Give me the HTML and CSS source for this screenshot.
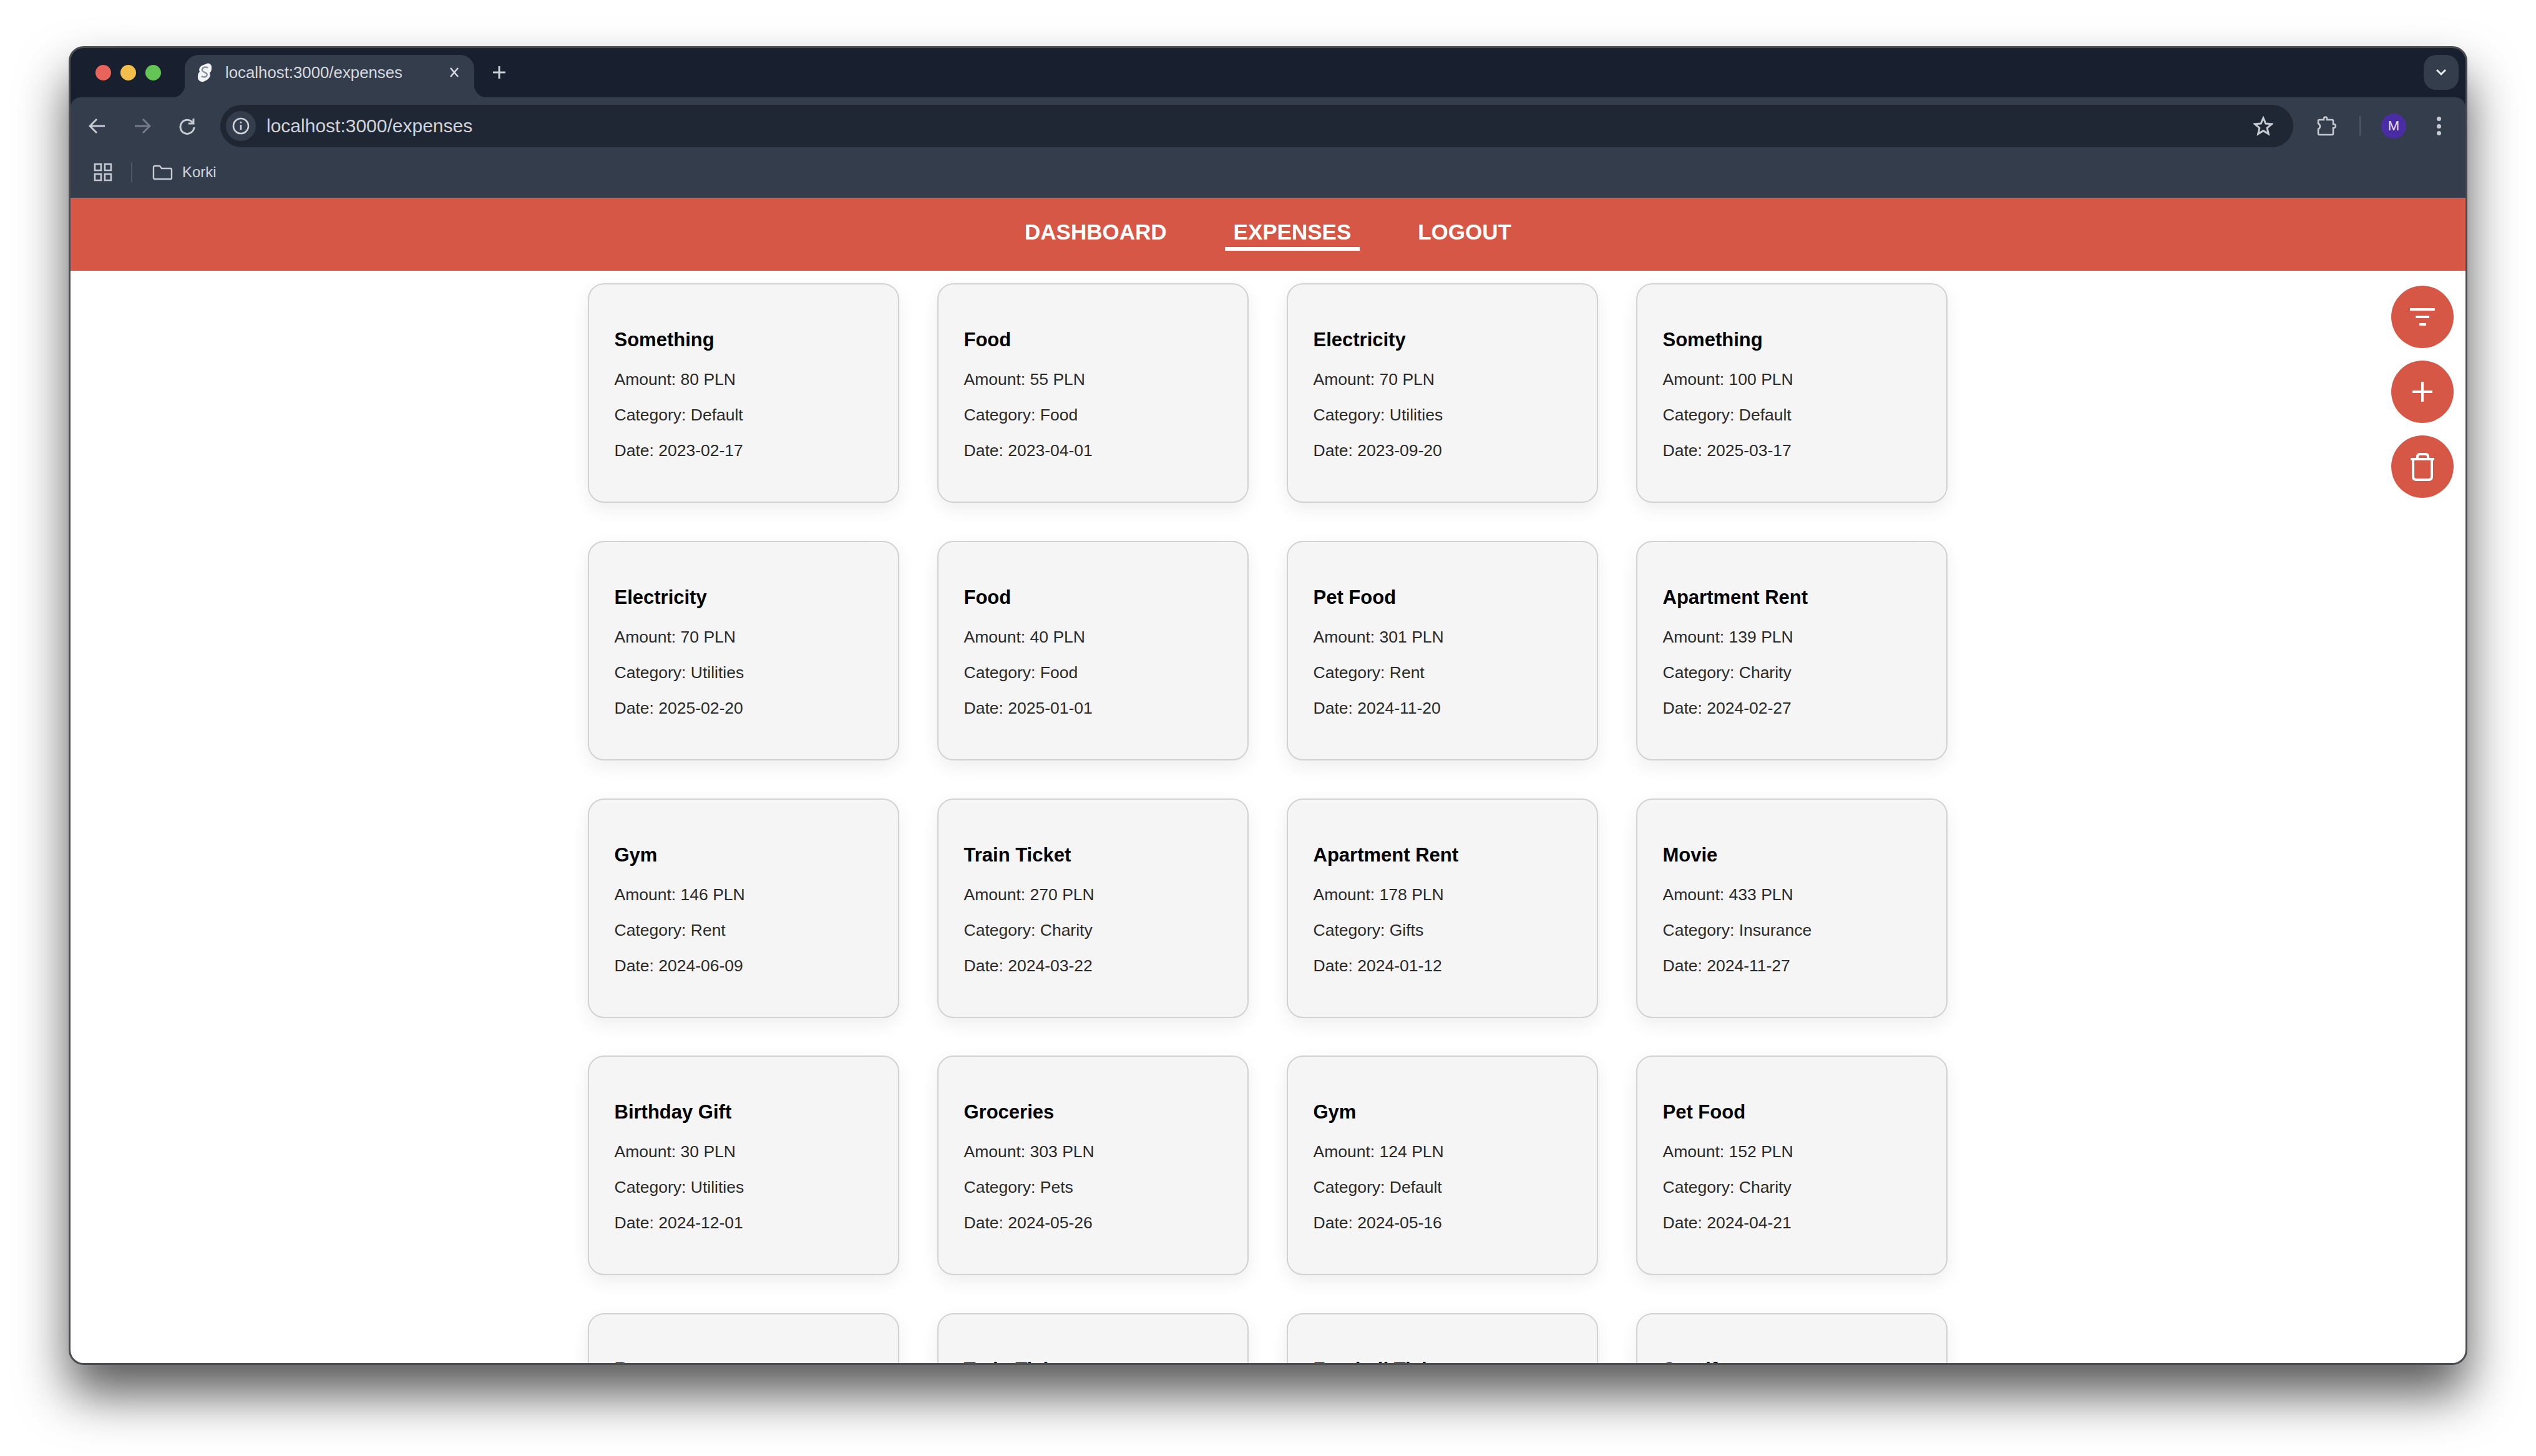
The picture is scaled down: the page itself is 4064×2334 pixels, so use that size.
FILE: index.html
```html
<!DOCTYPE html>
<html lang="en">
<head>
    <meta charset="UTF-8">
    <meta name="viewport" content="width=device-width, initial-scale=1.0">
    <title>Expenses</title>
    <link rel="stylesheet" href="styles.css">
</head>
<body>
    <div class="window">
        <div class="tabstrip">
            <div class="traffic">
                <span class="dot dot-red"></span>
                <span class="dot dot-yellow"></span>
                <span class="dot dot-green"></span>
            </div>
            <div class="tab">
                <svg class="favicon" viewBox="0 0 24 32">
                    <path d="M15 2 C20 0 24 4 23 10 C23 13 22 15 20 17 C22 21 20 25 16 28 L10 31 C5 32 0 28 1 22 C1 19 2 17 4 15 C2 11 4 7 8 5 Z" fill="#f2f3f5"/>
                    <path d="M17 9 C14 6 9 8 8 11 C7 14 10 15 12 16 C15 17 17 19 15 22 C13 24 9 24 7 22" fill="none" stroke="#8b929e" stroke-width="2.4"/>
                </svg>
                <span class="tab-title">localhost:3000/expenses</span>
                <svg class="tab-close" viewBox="0 0 18 18">
                    <path d="M3 2 L15 16 M15 2 L3 16" stroke="#d5d9e0" stroke-width="2.6" fill="none"/>
                </svg>
            </div>
            <svg class="new-tab" viewBox="0 0 24 24">
                <path d="M12 2 V22 M2 12 H22" stroke="#c8ced8" stroke-width="3" fill="none"/>
            </svg>
            <div class="tab-search">
                <svg viewBox="0 0 18 12" width="18" height="12">
                    <path d="M2 2 L9 9 L16 2" stroke="#e6e8ec" stroke-width="3" fill="none"/>
                </svg>
            </div>
        </div>

        <div class="toolbar">
            <div class="nav-btn">
                <svg viewBox="0 0 28 28" width="28" height="28"><path d="M26 14 H3 M13 3 L2 14 L13 25" stroke="#c5cad3" stroke-width="3" fill="none"/></svg>
            </div>
            <div class="nav-btn">
                <svg viewBox="0 0 28 28" width="28" height="28"><path d="M2 14 H25 M15 3 L26 14 L15 25" stroke="#737b8a" stroke-width="3" fill="none"/></svg>
            </div>
            <div class="nav-btn">
                <svg viewBox="0 0 28 28" width="28" height="28">
                    <path d="M23 9 A11 11 0 1 0 25 16" stroke="#c5cad3" stroke-width="3" fill="none"/>
                    <path d="M24 2 V10 H16" stroke="#c5cad3" stroke-width="3" fill="none"/>
                </svg>
            </div>
            <div class="omnibox">
                <div class="site-info">
                    <svg viewBox="0 0 28 28" width="28" height="28">
                        <circle cx="14" cy="14" r="12" stroke="#d0d4da" stroke-width="2.6" fill="none"/>
                        <path d="M14 12 V20 M14 7 V9.5" stroke="#d0d4da" stroke-width="2.6" fill="none"/>
                    </svg>
                </div>
                <span class="url">localhost:3000/expenses</span>
                <svg class="star" viewBox="0 0 32 32" width="32" height="32">
                    <path d="M16 3 L19.8 12 L29.5 12.8 L22.1 19.1 L24.3 28.6 L16 23.6 L7.7 28.6 L9.9 19.1 L2.5 12.8 L12.2 12 Z" stroke="#c5cad3" stroke-width="3" fill="none"/>
                </svg>
            </div>
            <div class="actions">
                <div class="action action-wide">
                    <svg viewBox="0 0 32 32" width="32" height="32">
                        <path d="M3 8 Q3 6 5 6 H12 V4 a2.5 2.5 0 0 1 5 0 V6 H25 Q27 6 27 8 V13 h1 a3 3 0 0 1 0 6 h-1 V28 Q27 30 25 30 H5 Q3 30 3 28 V21 a5 5 0 0 0 0 -9 Z" stroke="#c5cad3" stroke-width="2.6" fill="none"/>
                    </svg>
                </div>
                <span class="toolbar-sep"></span>
                <div class="action action-wide"><span class="avatar">M</span></div>
                <div class="action action-menu">
                    <span class="menu-dot"></span>
                    <span class="menu-dot"></span>
                    <span class="menu-dot"></span>
                </div>
            </div>
        </div>

        <div class="bookmarks">
            <svg viewBox="0 0 30 30" width="30" height="30">
                <path d="M2 2 H12 V12 H2 Z M18 2 H28 V12 H18 Z M2 18 H12 V28 H2 Z M18 18 H28 V28 H18 Z" stroke="#c5cad3" stroke-width="2.6" fill="none"/>
            </svg>
            <span class="bookmarks-sep"></span>
            <svg class="folder" viewBox="0 0 33 25" width="33" height="25">
                <path d="M2 4 Q2 2 4 2 H12 L15 6 H29 Q31 6 31 8 V21 Q31 23 29 23 H4 Q2 23 2 21 Z" stroke="#c5cad3" stroke-width="2.4" fill="none"/>
            </svg>
            <span class="bookmark-label">Korki</span>
        </div>

        <nav class="navbar">
            <a class="nav-link">DASHBOARD</a>
            <a class="nav-link active">EXPENSES</a>
            <a class="nav-link">LOGOUT</a>
        </nav>

        <main class="content">
            <div class="expense-grid">
                <div class="card"><h3>Something</h3><p>Amount: 80 PLN</p><p>Category: Default</p><p>Date: 2023-02-17</p></div>
                <div class="card"><h3>Food</h3><p>Amount: 55 PLN</p><p>Category: Food</p><p>Date: 2023-04-01</p></div>
                <div class="card"><h3>Electricity</h3><p>Amount: 70 PLN</p><p>Category: Utilities</p><p>Date: 2023-09-20</p></div>
                <div class="card"><h3>Something</h3><p>Amount: 100 PLN</p><p>Category: Default</p><p>Date: 2025-03-17</p></div>

                <div class="card"><h3>Electricity</h3><p>Amount: 70 PLN</p><p>Category: Utilities</p><p>Date: 2025-02-20</p></div>
                <div class="card"><h3>Food</h3><p>Amount: 40 PLN</p><p>Category: Food</p><p>Date: 2025-01-01</p></div>
                <div class="card"><h3>Pet Food</h3><p>Amount: 301 PLN</p><p>Category: Rent</p><p>Date: 2024-11-20</p></div>
                <div class="card"><h3>Apartment Rent</h3><p>Amount: 139 PLN</p><p>Category: Charity</p><p>Date: 2024-02-27</p></div>

                <div class="card"><h3>Gym</h3><p>Amount: 146 PLN</p><p>Category: Rent</p><p>Date: 2024-06-09</p></div>
                <div class="card"><h3>Train Ticket</h3><p>Amount: 270 PLN</p><p>Category: Charity</p><p>Date: 2024-03-22</p></div>
                <div class="card"><h3>Apartment Rent</h3><p>Amount: 178 PLN</p><p>Category: Gifts</p><p>Date: 2024-01-12</p></div>
                <div class="card"><h3>Movie</h3><p>Amount: 433 PLN</p><p>Category: Insurance</p><p>Date: 2024-11-27</p></div>

                <div class="card"><h3>Birthday Gift</h3><p>Amount: 30 PLN</p><p>Category: Utilities</p><p>Date: 2024-12-01</p></div>
                <div class="card"><h3>Groceries</h3><p>Amount: 303 PLN</p><p>Category: Pets</p><p>Date: 2024-05-26</p></div>
                <div class="card"><h3>Gym</h3><p>Amount: 124 PLN</p><p>Category: Default</p><p>Date: 2024-05-16</p></div>
                <div class="card"><h3>Pet Food</h3><p>Amount: 152 PLN</p><p>Category: Charity</p><p>Date: 2024-04-21</p></div>

                <div class="card"><h3>Restaurant</h3></div>
                <div class="card"><h3>Train Ticket</h3></div>
                <div class="card"><h3>Football Ticket</h3></div>
                <div class="card"><h3>Spotify</h3></div>
            </div>

            <div class="fab-stack">
                <button class="fab">
                    <svg viewBox="0 0 100 100" width="100" height="100">
                        <path d="M30 38 H70 M39 50 H61 M45 62 H56" stroke="#fff" stroke-width="4" fill="none"/>
                    </svg>
                </button>
                <button class="fab">
                    <svg viewBox="0 0 100 100" width="100" height="100">
                        <path d="M34 50 H66 M50 34 V66" stroke="#fff" stroke-width="4" fill="none"/>
                    </svg>
                </button>
                <button class="fab">
                    <svg viewBox="0 0 100 100" width="100" height="100">
                        <path d="M31 38 H69 M35 38 V66 Q35 71 40 71 H60 Q65 71 65 66 V38 M42 38 V34 Q42 30 46 30 H55 Q59 30 59 34 V38" stroke="#fff" stroke-width="4" fill="none"/>
                    </svg>
                </button>
            </div>
        </main>
    </div>
</body>
</html>
```
FILE: styles.css
```css
html,
body {
    height: 100%;
}

body {
    margin: 0;
    padding: 74px 110px 0;
    box-sizing: border-box;
    background-color: #fff;
    font-family: "Liberation Sans", Arial, sans-serif;
    overflow: hidden;
}

.window {
    display: flex;
    flex-direction: column;
    box-sizing: border-box;
    height: 2114px;
    border: 3px solid #4a4c50;
    border-radius: 24px;
    background-color: #182030;
    box-shadow: 0 47px 80px rgba(0, 0, 0, 0.65);
    overflow: hidden;
}

/* browser chrome */
.tabstrip {
    display: flex;
    align-items: flex-start;
    box-sizing: border-box;
    height: 79px;
    padding: 11px 11px 0 40px;
}

.traffic {
    display: flex;
    align-items: center;
    gap: 15px;
    height: 56px;
    margin-right: 38px;
}

.dot {
    width: 25px;
    height: 25px;
    border-radius: 50%;
}

.dot-red { background-color: #e8645a; }
.dot-yellow { background-color: #f1bd4b; }
.dot-green { background-color: #62c554; }

.tab {
    position: relative;
    display: flex;
    align-items: center;
    box-sizing: border-box;
    width: 464px;
    height: 68px;
    padding: 0 23px 12px 20px;
    border-radius: 22px 22px 0 0;
    background-color: #343d4c;
}

.tab::before,
.tab::after {
    content: "";
    position: absolute;
    bottom: 0;
    width: 20px;
    height: 20px;
}

.tab::before {
    left: -20px;
    background: radial-gradient(circle at 0 0, transparent 20px, #343d4c 20.5px);
}

.tab::after {
    right: -20px;
    background: radial-gradient(circle at 100% 0, transparent 20px, #343d4c 20.5px);
}

.favicon {
    width: 24px;
    height: 32px;
    margin-right: 21px;
}

.tab-title {
    flex: 1;
    font-size: 25.8px;
    color: #d5d9e0;
    white-space: nowrap;
}

.tab-close {
    width: 18px;
    height: 18px;
}

.new-tab {
    width: 24px;
    height: 24px;
    margin: 16px 0 0 28px;
}

.tab-search {
    display: flex;
    align-items: center;
    justify-content: center;
    width: 56px;
    height: 56px;
    margin-left: auto;
    border-radius: 20px;
    background-color: #343d4c;
}

.toolbar {
    display: flex;
    align-items: center;
    box-sizing: border-box;
    height: 92px;
    padding: 12px 0 12px 7px;
    border-radius: 16px 16px 0 0;
    background-color: #343d4c;
}

.nav-btn {
    display: flex;
    align-items: center;
    justify-content: center;
    width: 72px;
}

.omnibox {
    flex: 1;
    display: flex;
    align-items: center;
    height: 68px;
    margin-left: 17px;
    padding: 0 32px 0 9px;
    border-radius: 34px;
    background-color: #1e2733;
}

.site-info {
    display: flex;
    align-items: center;
    justify-content: center;
    width: 48px;
    height: 48px;
    margin-right: 17px;
    border-radius: 50%;
    background-color: #343d4c;
}

.url {
    flex: 1;
    font-size: 30px;
    color: #d0d4da;
}

.actions {
    display: flex;
    align-items: center;
    padding-right: 24px;
}

.action {
    display: flex;
    align-items: center;
    justify-content: center;
}

.action-wide {
    width: 106px;
}

.action-menu {
    flex-direction: column;
    gap: 4.5px;
    width: 38px;
}

.menu-dot {
    width: 7px;
    height: 7px;
    border-radius: 50%;
    background-color: #c5cad3;
}

.toolbar-sep {
    width: 2px;
    height: 32px;
    background-color: #4e5766;
}

.avatar {
    display: flex;
    align-items: center;
    justify-content: center;
    width: 40px;
    height: 40px;
    border-radius: 50%;
    background-color: #4a2ca5;
    color: #e6dcf8;
    font-family: Roboto, sans-serif;
    font-size: 21px;
}

.bookmarks {
    display: flex;
    align-items: center;
    box-sizing: border-box;
    height: 69px;
    padding: 0 0 13px 37px;
    background-color: #343d4c;
}

.bookmarks-sep {
    width: 2px;
    height: 32px;
    margin: 0 32px 0 30px;
    background-color: #4e5766;
}

.folder {
    margin-right: 15px;
}

.bookmark-label {
    font-size: 24px;
    color: #d0d4da;
}

/* app header */
.navbar {
    display: flex;
    justify-content: center;
    gap: 79px;
    box-sizing: border-box;
    height: 117px;
    padding-top: 35px;
    background-color: #d65745;
}

.nav-link {
    height: 44px;
    padding: 0 14px;
    border-bottom: 6px solid transparent;
    font-size: 35px;
    font-weight: bold;
    line-height: 40px;
    color: #fff;
}

.nav-link.active {
    border-bottom-color: #fff;
}

/* expense cards */
.content {
    position: relative;
    flex: 1;
    min-height: 0;
    padding: 20px 2px 0 0;
    background-color: #fff;
    overflow: hidden;
}

.expense-grid {
    display: grid;
    grid-template-columns: repeat(4, 499px);
    justify-content: center;
    column-gap: 61px;
    row-gap: 60.75px;
}

.card {
    box-sizing: border-box;
    min-height: 352px;
    padding: 69px 41px 52px;
    border: 2px solid #d2d2d2;
    border-radius: 26px;
    background-color: #f5f5f5;
    box-shadow: 0 10px 30px rgba(0, 0, 0, 0.07);
}

.card h3 {
    margin: 0 0 15px;
    font-size: 31px;
    font-weight: bold;
    line-height: 40px;
    color: #000;
}

.card p {
    margin: 0;
    font-size: 26.5px;
    line-height: 57px;
    color: #2a2a2a;
}

/* floating buttons */
.fab-stack {
    position: absolute;
    top: 24px;
    right: 19px;
    display: flex;
    flex-direction: column;
    gap: 20px;
}

.fab {
    display: block;
    width: 100px;
    height: 100px;
    padding: 0;
    border: none;
    border-radius: 50%;
    background-color: #d65745;
}

.fab svg {
    display: block;
}
```
